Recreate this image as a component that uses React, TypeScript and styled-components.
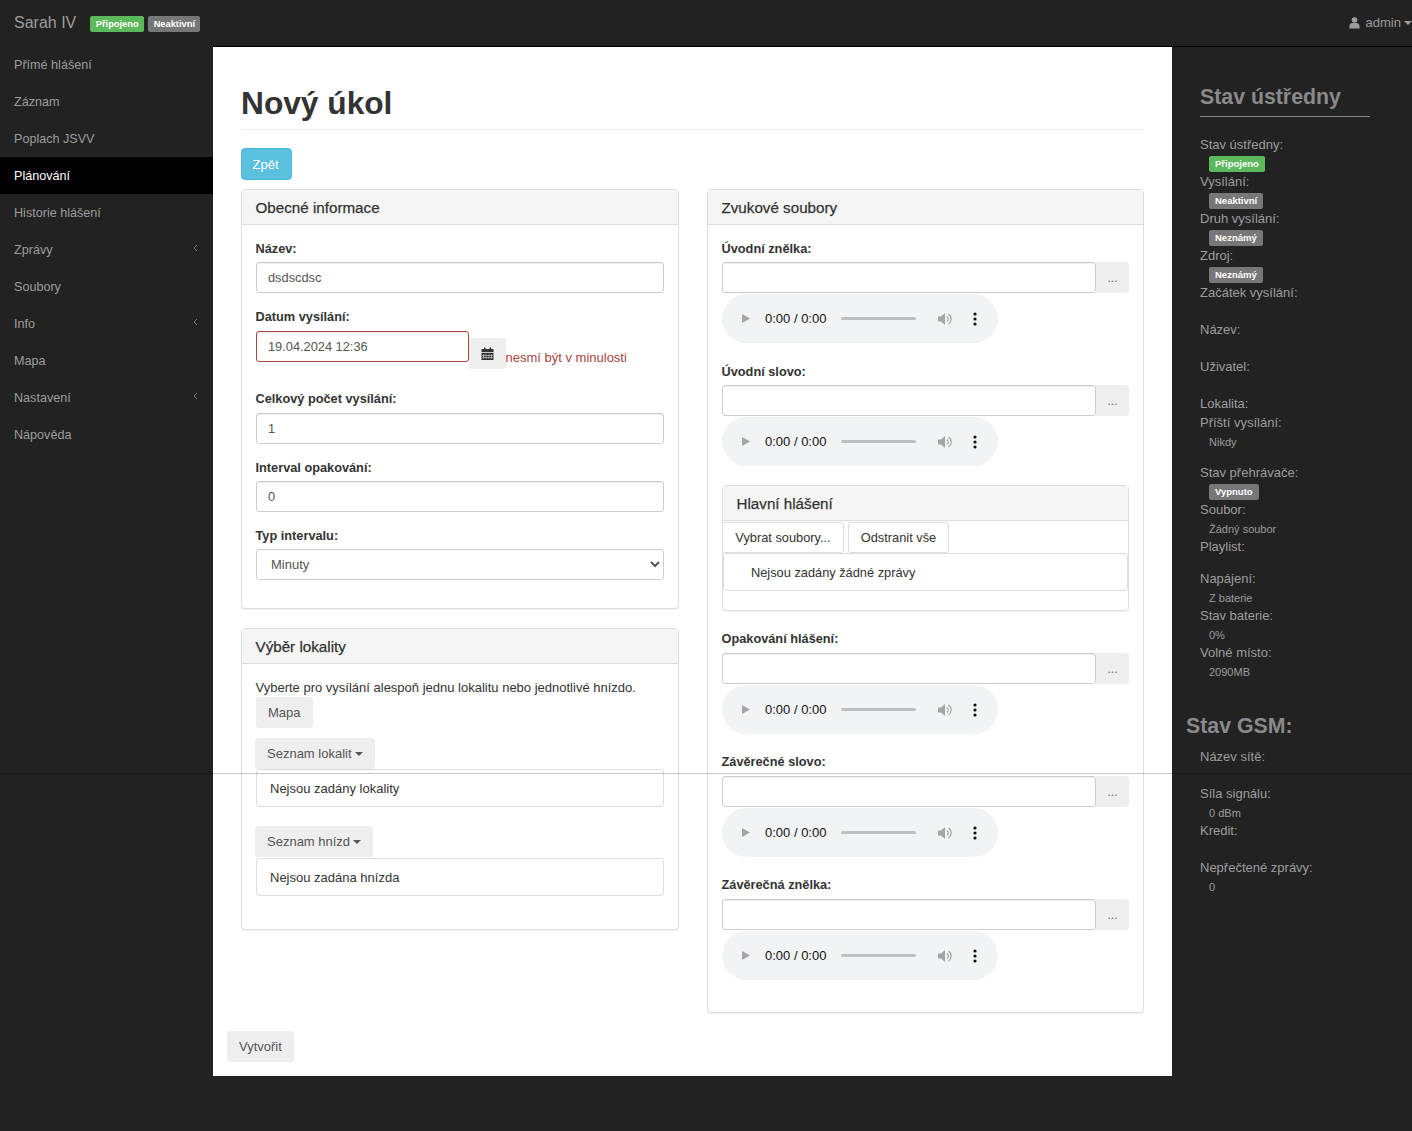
import React from "react";
import styled, { createGlobalStyle } from "styled-components";

const Global = createGlobalStyle`
  html, body { margin: 0; padding: 0; background: #222; }
  body { font-family: "Liberation Sans", Arial, sans-serif; font-size: 13px; line-height: 18px; color: #333; }
  * { box-sizing: border-box; }
`;

const Page = styled.div`
  position: relative;
  min-height: 1131px;
  background: #222;
`;
const Seam = styled.div`
  position: absolute;
  left: 0; right: 0; top: 773px;
  height: 1px;
  background: rgba(0, 0, 0, 0.22);
  pointer-events: none;
`;
const TopBar = styled.header`
  height: 46px;
  display: flex;
  align-items: center;
  padding-left: 14px;
  color: #9d9d9d;
`;
const Brand = styled.span`
  font-size: 16px;
  margin-right: 14px;
`;
const Badge = styled.span<{ $tone?: "green" | "gray" }>`
  display: inline-block;
  height: 16px;
  line-height: 16px;
  padding: 0 6px;
  border-radius: 2px;
  font-size: 9.5px;
  font-weight: 700;
  color: #fff;
  background: ${(p) => (p.$tone === "green" ? "#5cb85c" : "#777")};
`;
const TopBadge = styled(Badge)`
  margin-right: 4px;
  margin-top: 2px;
  padding: 0 5.5px;
  font-size: 9.3px;
`;
const UserMenu = styled.div`
  margin-left: auto;
  display: flex;
  align-items: center;
  gap: 6px;
  font-size: 13px;
`;
const Caret = styled.span<{ $color?: string }>`
  display: inline-block;
  width: 0; height: 0;
  margin-left: 3px;
  border-top: 4px solid ${(p) => p.$color || "#9d9d9d"};
  border-left: 4px solid transparent;
  border-right: 4px solid transparent;
`;
const UserCaret = styled(Caret)`
  margin-left: -3px;
`;
const Shell = styled.div`
  display: grid;
  grid-template-columns: 213px 959px 240px;
  align-items: start;
`;
const Nav = styled.nav`
  display: flex;
  flex-direction: column;
`;
const NavItem = styled.div<{ $active?: boolean }>`
  height: 37px;
  display: flex;
  align-items: center;
  justify-content: space-between;
  padding: 0 14px;
  font-size: 12.6px;
  color: ${(p) => (p.$active ? "#fff" : "#9d9d9d")};
  background: ${(p) => (p.$active ? "#000" : "transparent")};
`;
const ChevronWrap = styled.span`
  display: flex;
  margin-top: -4px;
`;
const Main = styled.main`
  background: #fff;
  border-top: 1px solid #000;
  padding: 0 28px 14px;
`;
const Title = styled.h1`
  margin: 0;
  padding: 37px 0 7px;
  font-size: 31.7px;
  line-height: 38px;
  font-weight: 700;
  color: #333;
  border-bottom: 1px solid #eee;
`;
const InfoButton = styled.button`
  display: block;
  margin: 18px 0 9px;
  width: 51px;
  height: 32px;
  padding: 0 2px 0 0;
  border: 1px solid #46b8da;
  border-radius: 4px;
  background: #5bc0de;
  color: #fff;
  font: 13px "Liberation Sans", Arial, sans-serif;
`;
const Columns = styled.div`
  display: grid;
  grid-template-columns: 438px 437px;
  gap: 28px;
  align-items: start;
`;
const Column = styled.div`
  display: flex;
  flex-direction: column;
  gap: 19px;
`;
const Panel = styled.section`
  border: 1px solid #ddd;
  border-radius: 4px;
  box-shadow: 0 1px 1px rgba(0, 0, 0, 0.05);
  background: #fff;
`;
const PanelHead = styled.div`
  height: 35px;
  display: flex;
  align-items: center;
  padding: 2px 13.5px 0;
  background: #f5f5f5;
  border-bottom: 1px solid #ddd;
  font-size: 15.2px;
  -webkit-text-stroke: 0.25px #333;
  color: #333;
`;
const PanelBody = styled.div`
  padding: 14px 14px 0;
`;
const Group = styled.div<{ $mb?: number }>`
  margin-bottom: ${(p) => p.$mb ?? 14}px;
`;
const Label = styled.label<{ $mb?: number }>`
  display: block;
  height: 18px;
  line-height: 20px;
  margin-left: -0.5px;
  margin-bottom: ${(p) => p.$mb ?? 5}px;
  font-weight: 700;
  font-size: 12.75px;
  color: #333;
`;
const Input = styled.div<{ $error?: boolean; $grow?: boolean }>`
  ${(p) => (p.$grow ? "flex: 1;" : "")}
  height: 31px;
  display: flex;
  align-items: center;
  padding: 0 11px;
  border: 1px solid ${(p) => (p.$error ? "#a94442" : "#ccc")};
  border-radius: 3px;
  color: #555;
  background: #fff;
  font-size: 12.8px;
  box-shadow: inset 0 1px 1px rgba(0, 0, 0, 0.075);
`;
const DateInput = styled(Input)`
  width: 213px;
`;
const DateRow = styled.div`
  display: flex;
  align-items: flex-start;
  height: 44px;
`;
const CalButton = styled.div`
  width: 37px;
  height: 31px;
  margin-top: 7px;
  display: flex;
  align-items: center;
  justify-content: center;
  background: #eee;
  border-radius: 0 3px 3px 0;
`;
const ErrorText = styled.span`
  margin-top: 18px;
  margin-left: -0.5px;
  color: #a94442;
  font-size: 13px;
`;
const SelectBox = styled.select`
  display: block;
  width: 100%;
  height: 31px;
  padding: 0 10px;
  border: 1px solid #ccc;
  border-radius: 3px;
  background: #fff;
  color: #555;
  font: 13px "Liberation Sans", Arial, sans-serif;
`;
const Hint = styled.p`
  margin: 0 0 0 -0.5px;
  height: 19px;
  line-height: 20px;
  font-size: 13px;
  color: #333;
`;
const GrayButton = styled.div<{ $mt?: number; $ml?: number }>`
  display: inline-flex;
  align-items: center;
  height: 31px;
  padding: 0 12px;
  margin-top: ${(p) => p.$mt ?? 0}px;
  margin-left: ${(p) => p.$ml ?? 0}px;
  border-radius: 3px;
  background: #eee;
  color: #555;
  font-size: 13px;
`;
const FooterButton = styled(GrayButton)`
  display: flex;
  width: 67px;
  margin: 18px 0 0 -14px;
`;
const Well = styled.div<{ $mt?: number }>`
  height: 38px;
  margin-top: ${(p) => p.$mt ?? 0}px;
  display: flex;
  align-items: center;
  padding: 2px 13px 0;
  border: 1px solid #ddd;
  border-radius: 3px;
  font-size: 13px;
  color: #333;
  background: #fff;
`;
const PickRow = styled.div`
  display: flex;
`;
const PickButton = styled.div`
  flex: none;
  width: 33px;
  height: 31px;
  display: flex;
  align-items: center;
  justify-content: center;
  padding-top: 1px;
  background: #eee;
  color: #666;
  border-radius: 0 3px 3px 0;
  font-size: 12px;
`;
const Player = styled.div`
  width: 276px;
  height: 49px;
  margin-top: 1px;
  display: flex;
  align-items: center;
  padding-left: 19px;
  border-radius: 25px;
  background: #f1f3f4;
  color: #111;
  font-size: 13px;
`;
const Time = styled.span`
  margin-left: 14px;
  width: 76px;
  white-space: nowrap;
`;
const Track = styled.span`
  width: 75px;
  height: 3px;
  border-radius: 2px;
  background: #bdbfc0;
`;
const SpeakerWrap = styled.span`
  display: flex;
  margin-left: 21px;
`;
const MenuWrap = styled.span`
  display: flex;
  margin-left: 20px;
`;
const SubPanel = styled(Panel)`
  margin-bottom: 18px;
  height: 126px;
`;
const ToolRow = styled.div`
  display: flex;
  gap: 4px;
  margin: 1px 0 0 -1px;
`;
const OutlineButton = styled.div<{ $w: number }>`
  width: ${(p) => p.$w}px;
  height: 31px;
  display: flex;
  align-items: center;
  justify-content: center;
  border: 1px solid #ddd;
  border-radius: 3px;
  color: #333;
  font-size: 12.8px;
  background: #fff;
`;
const MessageWell = styled(Well)`
  padding-left: 27px;
  font-size: 12.8px;
`;
const Side = styled.aside`
  border-top: 1px solid #000;
  padding: 36px 42px 0 28px;
  color: #9d9d9d;
`;
const SideTitle = styled.h2`
  margin: 0 0 19px;
  padding-bottom: 5px;
  height: 34px;
  width: 170px;
  font-size: 21.3px;
  line-height: 28px;
  font-weight: 700;
  color: #8a8a8a;
  border-bottom: 1px solid #8a8a8a;
  white-space: nowrap;
`;
const GsmTitle = styled.h2`
  margin: 31px 0 8px -14px;
  height: 28px;
  font-size: 21.3px;
  line-height: 28px;
  font-weight: 700;
  color: #8a8a8a;
`;
const StatusGroup = styled.div`
  margin-bottom: 13.5px;
`;
const Term = styled.div`
  height: 18.5px;
  line-height: 18.5px;
  font-size: 13px;
  white-space: nowrap;
`;
const Def = styled.div`
  height: 18.5px;
  display: flex;
  align-items: center;
  padding-left: 9px;
  padding-top: 1px;
  font-size: 11px;
  white-space: nowrap;
`;

const items: [string, boolean?, boolean?][] = [
  ["Přímé hlášení"], ["Záznam"], ["Poplach JSVV"], ["Plánování", false, true],
  ["Historie hlášení"], ["Zprávy", true], ["Soubory"], ["Info", true], ["Mapa"],
  ["Nastavení", true], ["Nápověda"],
];

const Chevron = () => (
  <ChevronWrap>
    <svg width="7" height="8" viewBox="0 0 7 8"><path d="M5 1 2 4l3 3" fill="none" stroke="#777" strokeWidth="1" /></svg>
  </ChevronWrap>
);
const UserIcon = () => (
  <svg width="11" height="12" viewBox="0 0 11 12"><circle cx="5.5" cy="3" r="2.8" fill="#9d9d9d" /><path d="M.5 11.5V9c0-1.8 1.6-3 3-3h4c1.4 0 3 1.2 3 3v2.5z" fill="#9d9d9d" /></svg>
);
const CalendarIcon = () => (
  <svg width="13" height="13" viewBox="0 0 13 13">
    <path d="M.5 2h2.500V.5h1.500V2h4V.5h1.500V2h2.500v3H.5z" fill="#333" />
    <path d="M.5 5.800h12V13H.5z" fill="#333" />
    <path d="M2.500 7v5M5 7v5M8 7v5M10.500 7v5M1 8.500h11M1 10.500h11" stroke="#eee" strokeWidth=".5" />
  </svg>
);
const PlayIcon = () => (
  <svg width="10" height="11" viewBox="0 0 10 11"><path d="M1 1v9l8-4.500z" fill="#a3a5a6" /></svg>
);
const SpeakerIcon = () => (
  <svg width="16" height="14" viewBox="0 0 16 14">
    <path d="M1 4.500v5h3l4 3.500V1L4 4.500z" fill="#a3a5a6" />
    <path d="M10 4.500a3.200 3.200 0 0 1 0 5M11.500 2a6 6 0 0 1 0 10" fill="none" stroke="#a3a5a6" strokeWidth="1.200" />
  </svg>
);
const KebabIcon = () => (
  <svg width="4" height="14" viewBox="0 0 4 14"><circle cx="2" cy="2" r="1.600" fill="#111" /><circle cx="2" cy="7" r="1.600" fill="#111" /><circle cx="2" cy="12" r="1.600" fill="#111" /></svg>
);

const AudioPlayer = () => (
  <Player>
    <PlayIcon />
    <Time>0:00 / 0:00</Time>
    <Track />
    <SpeakerWrap><SpeakerIcon /></SpeakerWrap>
    <MenuWrap><KebabIcon /></MenuWrap>
  </Player>
);

const FileField = ({ label, labelGap = 5, after = 19 }: { label: string; labelGap?: number; after?: number }) => (
  <Group $mb={after}>
    <Label $mb={labelGap}>{label}</Label>
    <PickRow>
      <Input $grow />
      <PickButton>...</PickButton>
    </PickRow>
    <AudioPlayer />
  </Group>
);

const SideStatus = () => (
  <>
    <StatusGroup>
      <Term>Stav ústředny:</Term>
      <Def><Badge $tone="green">Připojeno</Badge></Def>
      <Term>Vysílání:</Term>
      <Def><Badge>Neaktivní</Badge></Def>
      <Term>Druh vysílání:</Term>
      <Def><Badge>Neznámý</Badge></Def>
      <Term>Zdroj:</Term>
      <Def><Badge>Neznámý</Badge></Def>
      <Term>Začátek vysílání:</Term>
      <Def />
      <Term>Název:</Term>
      <Def />
      <Term>Uživatel:</Term>
      <Def />
      <Term>Lokalita:</Term>
      <Term>Příští vysílání:</Term>
      <Def>Nikdy</Def>
    </StatusGroup>
    <StatusGroup>
      <Term>Stav přehrávače:</Term>
      <Def><Badge>Vypnuto</Badge></Def>
      <Term>Soubor:</Term>
      <Def>Žádný soubor</Def>
      <Term>Playlist:</Term>
    </StatusGroup>
    <StatusGroup>
      <Term>Napájení:</Term>
      <Def>Z baterie</Def>
      <Term>Stav baterie:</Term>
      <Def>0%</Def>
      <Term>Volné místo:</Term>
      <Def>2090MB</Def>
    </StatusGroup>
  </>
);

export default function App() {
  return (
    <Page>
      <Global />
      <TopBar>
        <Brand>Sarah IV</Brand>
        <TopBadge $tone="green">Připojeno</TopBadge>
        <TopBadge>Neaktivní</TopBadge>
        <UserMenu>
          <UserIcon />
          <span>admin</span>
          <UserCaret />
        </UserMenu>
      </TopBar>
      <Shell>
        <Nav>
          {items.map(([name, sub, active]) => (
            <NavItem key={name} $active={active}>
              {name}
              {sub && <Chevron />}
            </NavItem>
          ))}
        </Nav>
        <Main>
          <Title>Nový úkol</Title>
          <InfoButton>Zpět</InfoButton>
          <Columns>
            <Column>
              <Panel>
                <PanelHead>Obecné informace</PanelHead>
                <PanelBody>
                  <Group>
                    <Label>Název:</Label>
                    <Input>dsdscdsc</Input>
                  </Group>
                  <Group>
                    <Label $mb={6}>Datum vysílání:</Label>
                    <DateRow>
                      <DateInput $error>19.04.2024 12:36</DateInput>
                      <CalButton><CalendarIcon /></CalButton>
                      <ErrorText>nesmí být v minulosti</ErrorText>
                    </DateRow>
                  </Group>
                  <Group>
                    <Label $mb={6}>Celkový počet vysílání:</Label>
                    <Input>1</Input>
                  </Group>
                  <Group>
                    <Label>Interval opakování:</Label>
                    <Input>0</Input>
                  </Group>
                  <Group $mb={28}>
                    <Label>Typ intervalu:</Label>
                    <SelectBox defaultValue="Minuty">
                      <option>Minuty</option>
                    </SelectBox>
                  </Group>
                </PanelBody>
              </Panel>
              <Panel>
                <PanelHead>Výběr lokality</PanelHead>
                <PanelBody>
                  <Hint>Vyberte pro vysílání alespoň jednu lokalitu nebo jednotlivé hnízdo.</Hint>
                  <GrayButton>Mapa</GrayButton>
                  <div>
                    <GrayButton $mt={10} $ml={-1}>Seznam lokalit <Caret $color="#555" /></GrayButton>
                  </div>
                  <Group $mb={19}>
                    <Well>Nejsou zadány lokality</Well>
                  </Group>
                  <GrayButton $ml={-1}>Seznam hnízd <Caret $color="#555" /></GrayButton>
                  <Group $mb={33}>
                    <Well $mt={1}>Nejsou zadána hnízda</Well>
                  </Group>
                </PanelBody>
              </Panel>
            </Column>
            <Panel>
              <PanelHead>Zvukové soubory</PanelHead>
              <PanelBody>
                <FileField label="Úvodní znělka:" />
                <FileField label="Úvodní slovo:" />
                <SubPanel>
                  <PanelHead>Hlavní hlášení</PanelHead>
                  <ToolRow>
                    <OutlineButton $w={122}>Vybrat soubory...</OutlineButton>
                    <OutlineButton $w={101}>Odstranit vše</OutlineButton>
                  </ToolRow>
                  <MessageWell>Nejsou zadány žádné zprávy</MessageWell>
                </SubPanel>
                <FileField label="Opakování hlášení:" labelGap={6} after={18} />
                <FileField label="Závěrečné slovo:" labelGap={6} after={18} />
                <FileField label="Závěrečná znělka:" labelGap={6} after={32} />
              </PanelBody>
            </Panel>
          </Columns>
          <FooterButton>Vytvořit</FooterButton>
        </Main>
        <Side>
          <SideTitle>Stav ústředny</SideTitle>
          <SideStatus />
          <GsmTitle>Stav GSM:</GsmTitle>
          <Term>Název sítě:</Term>
          <Def />
          <Term>Síla signálu:</Term>
          <Def>0 dBm</Def>
          <Term>Kredit:</Term>
          <Def />
          <Term>Nepřečtené zprávy:</Term>
          <Def>0</Def>
        </Side>
      </Shell>
      <Seam />
    </Page>
  );
}
